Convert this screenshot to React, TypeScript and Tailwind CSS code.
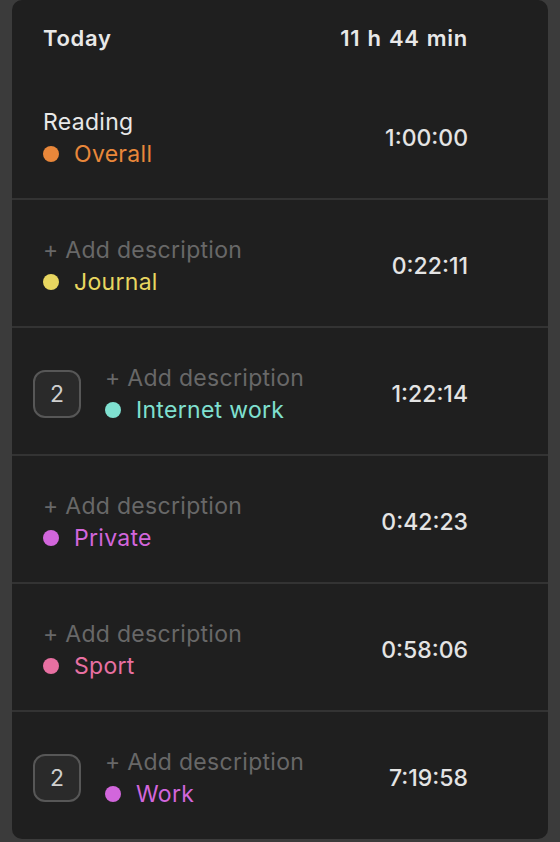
const entries = [
  { desc: "Reading", project: "Overall", color: "#e9873a", time: "1:00:00" },
  { project: "Journal", color: "#e8d660", time: "0:22:11" },
  { project: "Internet work", color: "#7fe0d0", time: "1:22:14", count: 2 },
  { project: "Private", color: "#d266dc", time: "0:42:23" },
  { project: "Sport", color: "#e870a2", time: "0:58:06" },
  { project: "Work", color: "#d266dc", time: "7:19:58", count: 2 },
];

type Entry = (typeof entries)[number] & { desc?: string; count?: number };

function Row({ entry, first }: { entry: Entry; first: boolean }) {
  return (
    <div
      className={`flex items-center pr-[80px] ${first ? "h-[122px] pt-[2px]" : "h-[128px] border-t-2 border-[#333333] pt-[6px]"} ${entry.count ? "pl-[21px]" : "pl-[31px]"}`}
    >
      {entry.count && (
        <div className="mr-[24px] flex size-[48px] items-center justify-center rounded-xl border-2 border-[#575757] bg-[#2a2a2a] text-[23px] text-[#cfcfcf]">
          {entry.count}
        </div>
      )}
      <div className="flex flex-1 flex-col text-[23px] leading-[32px] tracking-[0.3px]">
        {entry.desc ? (
          <p className="text-[#e8e8e8]">{entry.desc}</p>
        ) : (
          <p className="text-[#686868]">+ Add description</p>
        )}
        <p className="flex items-center gap-[15px]" style={{ color: entry.color }}>
          <span
            className="inline-block size-[16px] rounded-full"
            style={{ backgroundColor: entry.color }}
          />
          {entry.project}
        </p>
      </div>
      <p className="text-[23px] font-medium text-[#e4e4e4]">{entry.time}</p>
    </div>
  );
}

export default function App() {
  return (
    <div className="h-[842px] bg-[#3b3b3b] px-[12px] pb-[3px] font-['Inter',sans-serif]">
      <div className="flex h-full flex-col overflow-hidden rounded-b-[10px] rounded-t-[10px] bg-[#1f1f1f]">
        <div className="flex h-[76px] items-center justify-between pr-[80px] pl-[31px] text-[22px] font-semibold tracking-[0.7px] text-[#e8e8e8]">
          <p>Today</p>
          <p className="[word-spacing:1px]">11 h 44 min</p>
        </div>
        {entries.map((e, i) => (
          <Row key={i} entry={e} first={i === 0} />
        ))}
      </div>
    </div>
  );
}
